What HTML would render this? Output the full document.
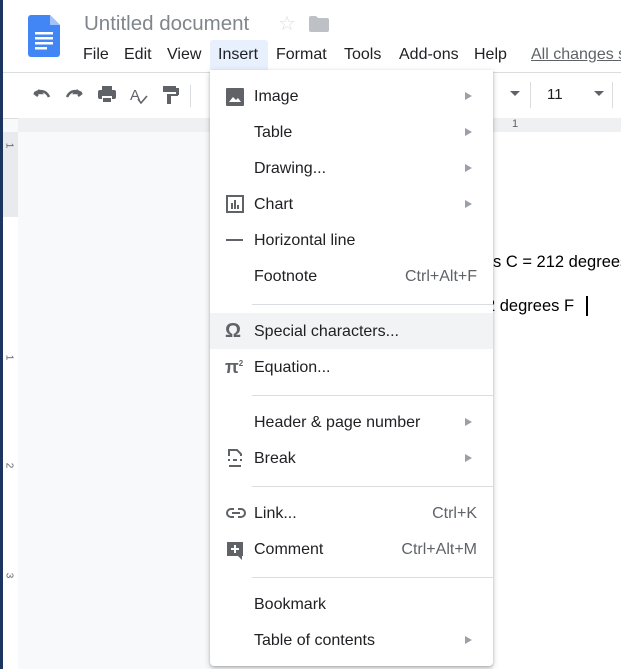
<!DOCTYPE html>
<html><head><style>
html,body{margin:0;width:621px;height:669px;overflow:hidden;}
body{position:relative;background:#f8f9fa;font-family:"Liberation Sans",Arial,sans-serif;}
.a{position:absolute}
.mi{position:absolute;left:254px;font-size:16px;color:#202124;transform:translateY(-50%);margin-top:1px}
.sc{position:absolute;font-size:16px;color:#5f6368;transform:translateY(-50%);margin-top:1px}
.ar{position:absolute;left:465px;width:0;height:0;border-left:7px solid #9aa0a6;border-top:4px solid transparent;border-bottom:4px solid transparent;transform:translateY(-50%)}
.sep{position:absolute;left:42px;right:0;height:1px;background:#dadce0}
.ic{position:absolute;left:16px}
.mb{position:absolute;top:46px;font-size:16px;color:#202124}
</style></head><body>
<div class="a" style="left:0;top:0;width:621px;height:72px;background:#fff"></div>
<div class="a" style="left:0;top:72px;width:621px;height:45px;background:#fff;border-top:1px solid #dadce0;border-bottom:1px solid #dadce0"></div>
<div class="a" style="left:18px;top:118px;width:603px;height:14px;background:#eef0f2"></div>
<div class="a" style="left:3px;top:132px;width:15px;height:537px;background:#fff;border-right:1px solid #dadce0"></div>
<div class="a" style="left:3px;top:132px;width:15px;height:85px;background:#e8eaed"></div>
<div class="a" style="left:0;top:0;width:3px;height:669px;background:#1b3560"></div>
<div class="a" style="left:18px;top:132px;width:603px;height:537px;background:#f8f9fa"></div>
<div class="a" style="left:493px;top:132px;width:128px;height:537px;background:#fff"></div>
<svg class="a" style="left:28px;top:15px" width="32" height="42" viewBox="0 0 32 42"><path d="M3 0h19l10 10v29a3 3 0 0 1-3 3H3a3 3 0 0 1-3-3V3a3 3 0 0 1 3-3z" fill="#4285f4"/><path d="M22 0v10h10z" fill="#a1c2fa"/><rect x="7" y="17" width="18" height="2.5" fill="#fff"/><rect x="7" y="22" width="18" height="2.5" fill="#fff"/><rect x="7" y="27" width="18" height="2.5" fill="#fff"/><rect x="7" y="32" width="12" height="2.5" fill="#fff"/></svg>
<div class="a" style="left:84px;top:12px;font-size:20.5px;color:#80868b;white-space:nowrap">Untitled document</div>
<div class="a" style="left:278px;top:11px;font-size:20px;color:#dadce0">☆</div>
<svg class="a" style="left:309px;top:16px" width="20" height="16"><path d="M0 2a2 2 0 0 1 2-2h5l2 2h9a2 2 0 0 1 2 2v10a2 2 0 0 1-2 2H2a2 2 0 0 1-2-2z" fill="#bdc1c6"/></svg>
<div class="a" style="left:210px;top:40px;width:58px;height:30px;background:#e8f0fe;border-radius:3px 3px 0 0"></div>
<div class="mb" style="left:83px">File</div>
<div class="mb" style="left:124px">Edit</div>
<div class="mb" style="left:167px">View</div>
<div class="mb" style="left:218px">Insert</div>
<div class="mb" style="left:276px">Format</div>
<div class="mb" style="left:344px">Tools</div>
<div class="mb" style="left:399px">Add-ons</div>
<div class="mb" style="left:474px">Help</div>
<div class="mb" style="left:531px;color:#5f6368;text-decoration:underline;white-space:nowrap;width:90px;overflow:hidden">All changes saved</div>
<svg class="a" style="left:32px;top:85px" width="150" height="22" fill="#5f6368">
<path d="M2 8h7l-3-3M2 8l4 3M3 8c4-3 11-3 14 4" stroke="#5f6368" stroke-width="2.5" fill="none"/>
<path d="M50 8h-7l3-3M50 8l-4 3M49 8c-4-3-11-3-14 4" stroke="#5f6368" stroke-width="2.5" fill="none"/>
<rect x="66" y="5" width="18" height="9" rx="2"/><rect x="70" y="1" width="10" height="4"/><rect x="70" y="11" width="10" height="6" fill="#fff"/><rect x="71" y="13" width="8" height="4"/>
<text x="98" y="15" font-size="15" font-family="Liberation Sans" fill="#5f6368">A</text><path d="M106 14l3 4 6-7" stroke="#5f6368" stroke-width="1.6" fill="none"/>
<rect x="131" y="1" width="13" height="6"/><rect x="144" y="3" width="3" height="7"/><rect x="135" y="9" width="11" height="2"/><rect x="135" y="9" width="4" height="10"/>
</svg>
<div class="a" style="left:190px;top:85px;width:1px;height:22px;background:#dadce0"></div>
<div class="a" style="left:510px;top:91px;border-top:5px solid #5f6368;border-left:5px solid transparent;border-right:5px solid transparent"></div>
<div class="a" style="left:530px;top:82px;width:1px;height:26px;background:#dadce0"></div>
<div class="a" style="left:547px;top:86px;font-size:15px;color:#202124">11</div>
<div class="a" style="left:594px;top:91px;border-top:5px solid #5f6368;border-left:5px solid transparent;border-right:5px solid transparent"></div>
<div class="a" style="left:612px;top:82px;width:1px;height:26px;background:#dadce0"></div>
<div class="a" style="left:512px;top:118px;font-size:11px;color:#5f6368">1</div>
<div class="a" style="left:493px;top:253px;font-size:16.5px;color:#000;white-space:nowrap">s C = 212 degrees</div>
<div class="a" style="left:486px;top:297px;font-size:16.5px;color:#000;white-space:nowrap">2 degrees F</div>
<div class="a" style="left:586px;top:296px;width:2px;height:20px;background:#000"></div>
<div class="a" style="left:6px;top:140px;font-size:10px;color:#5f6368;transform:rotate(90deg)">1</div>
<div class="a" style="left:6px;top:352px;font-size:10px;color:#5f6368;transform:rotate(90deg)">1</div>
<div class="a" style="left:6px;top:460px;font-size:10px;color:#5f6368;transform:rotate(90deg)">2</div>
<div class="a" style="left:6px;top:570px;font-size:10px;color:#5f6368;transform:rotate(90deg)">3</div>
<div class="a" style="left:210px;top:70px;width:283px;height:596px;background:#fff;border-radius:0 0 4px 4px;box-shadow:0 2px 6px rgba(60,64,67,.3),0 1px 2px rgba(60,64,67,.2)">
<div class="a" style="left:0;top:243px;width:283px;height:36px;background:#f1f3f4"></div>
<svg class="ic" style="top:18px" width="18" height="18"><rect width="18" height="18" rx="1" fill="#5f6368"/><path d="M3 14l4-5 3 3 2-2 3 4z" fill="#fff"/></svg>
<svg class="ic" style="top:125px" width="18" height="18"><rect x="1" y="1" width="16" height="16" fill="none" stroke="#5f6368" stroke-width="2"/><rect x="5" y="8" width="2" height="6" fill="#5f6368"/><rect x="8" y="5" width="2" height="9" fill="#5f6368"/><rect x="11" y="10" width="2" height="4" fill="#5f6368"/></svg>
<div class="ic" style="top:169px;width:17px;height:2px;background:#5f6368"></div>
<div class="ic" style="top:250px;font-size:20px;color:#5f6368;font-weight:bold;left:15px">Ω</div>
<div class="ic" style="top:287px;font-size:18px;color:#5f6368;font-weight:bold;left:15px">π<sup style="font-size:8px">2</sup></div>
<svg class="ic" style="top:379px" width="18" height="18" fill="none" stroke="#5f6368" stroke-width="2"><path d="M3 7V1h8l4 4v2M3 17h12M2 11h2M7 11h4M14 11h2"/></svg>
<svg class="ic" style="top:437px" width="20" height="12" fill="none" stroke="#5f6368" stroke-width="2"><path d="M8 2H5a4 4 0 0 0 0 8h3M12 2h3a4 4 0 0 1 0 8h-3M6 6h8"/></svg>
<svg class="ic" style="top:471px" width="18" height="20"><path d="M1 1h16v14H16v4l-4-4H1z" fill="#5f6368"/><path d="M9 4v8M5 8h8" stroke="#fff" stroke-width="2"/></svg>
<div class="sep" style="top:234px"></div><div class="sep" style="top:325px"></div><div class="sep" style="top:416px"></div><div class="sep" style="top:507px"></div>
</div>
<div class="mi" style="top:96px">Image</div><div class="mi" style="top:132px">Table</div><div class="mi" style="top:168px">Drawing...</div><div class="mi" style="top:204px">Chart</div><div class="mi" style="top:240px">Horizontal line</div><div class="mi" style="top:276px">Footnote</div>
<div class="mi" style="top:331px">Special characters...</div><div class="mi" style="top:367px">Equation...</div>
<div class="mi" style="top:422px">Header &amp; page number</div><div class="mi" style="top:458px">Break</div>
<div class="mi" style="top:513px">Link...</div><div class="mi" style="top:549px">Comment</div>
<div class="mi" style="top:604px">Bookmark</div><div class="mi" style="top:640px">Table of contents</div>
<div class="sc" style="top:276px;right:144px">Ctrl+Alt+F</div>
<div class="sc" style="top:513px;right:144px">Ctrl+K</div>
<div class="sc" style="top:549px;right:144px">Ctrl+Alt+M</div>
<div class="ar" style="top:96px"></div><div class="ar" style="top:132px"></div><div class="ar" style="top:168px"></div><div class="ar" style="top:204px"></div><div class="ar" style="top:422px"></div><div class="ar" style="top:458px"></div><div class="ar" style="top:640px"></div>
</body></html>
